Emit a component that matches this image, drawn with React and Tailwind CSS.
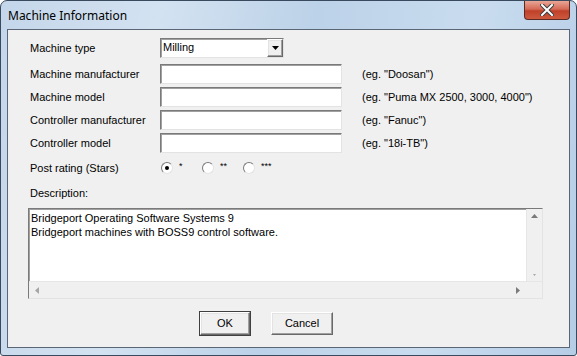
import React from 'react';

const sunken =
  'bg-white border border-t-[#7a7a7a] border-l-[#7a7a7a] border-b-[#e3e3e3] border-r-[#e3e3e3] shadow-[inset_1px_1px_0_#a0a0a0]';
const raised =
  'border border-t-white border-l-white border-b-[#696969] border-r-[#696969] shadow-[inset_-1px_-1px_0_#a0a0a0,inset_1px_1px_0_#e3e3e3] bg-[#f0f0f0]';

const Field = ({ label, hint }) => (
  <div className="flex items-center h-[20px]">
    <div className="w-[130px]">{label}</div>
    <div className={`w-[182px] h-[20px] ${sunken}`} />
    {hint && <div className="ml-[20px]">{hint}</div>}
  </div>
);

const Radio = ({ checked, label }) => (
  <div className="flex items-center w-[41px]">
    <span className="relative w-[12px] h-[12px] rounded-full bg-white border border-t-[#7a7a7a] border-l-[#7a7a7a] border-b-[#e3e3e3] border-r-[#e3e3e3] flex items-center justify-center">
      {checked && <span className="w-[4px] h-[4px] rounded-full bg-black" />}
    </span>
    <span className="ml-[6px] text-[9px] leading-none -mt-[3px]">{label}</span>
  </div>
);

const App = () => {
  return (
    <div className="w-[577px] h-[356px] bg-white overflow-hidden">
      <div className="relative w-[577px] h-[356px] rounded-t-[7px] rounded-b-[3px] border border-[#3a4a5e] bg-[linear-gradient(100deg,#c4d6ea_0%,#d3e2f1_25%,#bcd2e8_50%,#c9dcef_75%,#b6cde6_100%)] flex flex-col">
        <div className="h-[28px] flex items-start">
          <div className="pl-[7px] pt-[6px] text-[12px] text-black" style={{ fontFamily: '"Noto Sans", sans-serif' }}>
            Machine Information
          </div>
          <div className="ml-auto mr-[6px] w-[46px] h-[19px] rounded-b-[4px] border border-t-0 border-[#5b2a22] bg-[linear-gradient(180deg,#e9a696_0%,#d46a56_45%,#c0402a_55%,#cc5a3e_100%)] flex items-center justify-center">
            <svg width="14" height="12" viewBox="0 0 14 12">
              <path d="M2 1 L12 11 M12 1 L2 11" stroke="#3d3d3d" strokeWidth="4" strokeLinecap="square" />
              <path d="M2 1 L12 11 M12 1 L2 11" stroke="#ffffff" strokeWidth="2" strokeLinecap="square" />
            </svg>
          </div>
        </div>
        <div
          className="mx-[6px] mb-[7px] flex-1 border border-[#5a6676] bg-[#f0f0f0] flex flex-col text-[11px] text-black"
          style={{ fontFamily: '"Liberation Sans", Arial, sans-serif' }}
        >
          <div className="pl-[22px] pt-[8px] flex flex-col">
            <div className="flex items-center h-[20px]">
              <div className="w-[130px]">Machine type</div>
              <div className={`w-[124px] h-[20px] ${sunken} flex items-stretch`}>
                <div className="flex-1 pl-[2px] leading-[16px]">Milling</div>
                <div className={`w-[16px] ${raised} flex items-center justify-center`}>
                  <svg width="7" height="4" viewBox="0 0 7 4">
                    <path d="M0 0 H7 L3.5 4 Z" fill="#000" />
                  </svg>
                </div>
              </div>
            </div>
            <div className="mt-[6px] flex flex-col gap-[3px]">
              <Field label="Machine manufacturer" hint={'(eg. "Doosan")'} />
              <Field label="Machine model" hint={'(eg. "Puma MX 2500, 3000, 4000")'} />
              <Field label="Controller manufacturer" hint={'(eg. "Fanuc")'} />
              <Field label="Controller model" hint={'(eg. "18i-TB")'} />
            </div>
            <div className="mt-[8px] flex items-center h-[14px]">
              <div className="w-[131px]">Post rating (Stars)</div>
              <Radio checked label="*" />
              <Radio label="**" />
              <Radio label="***" />
            </div>
            <div className="mt-[10px] h-[14px]">Description:</div>
          </div>
          <div className={`ml-[20px] mt-[9px] w-[515px] h-[91px] ${sunken} flex flex-col`}>
            <div className="flex flex-1">
              <div className="flex-1 pl-[2px] pt-[2px] leading-[14px]">
                <div>Bridgeport Operating Software Systems 9</div>
                <div>Bridgeport machines with BOSS9 control software.</div>
              </div>
              <div className="w-[16px] bg-[#f0f0f0] border-l border-[#e6e6e6] flex flex-col items-center justify-between py-[5px]">
                <svg width="7" height="4" viewBox="0 0 7 4">
                  <path d="M0 4 H7 L3.5 0 Z" fill="#7a7a7a" />
                </svg>
                <svg width="3" height="2" viewBox="0 0 3 2">
                  <path d="M0 0 H3 L1.5 2 Z" fill="#a6a6a6" />
                </svg>
              </div>
            </div>
            <div className="h-[17px] flex bg-[#f0f0f0] border-t border-[#e6e6e6]">
              <div className="flex-1 flex items-center justify-between px-[6px]">
                <svg width="4" height="7" viewBox="0 0 4 7">
                  <path d="M4 0 V7 L0 3.5 Z" fill="#a6a6a6" />
                </svg>
                <svg width="4" height="7" viewBox="0 0 4 7">
                  <path d="M0 0 V7 L4 3.5 Z" fill="#7a7a7a" />
                </svg>
              </div>
              <div className="w-[16px] bg-[#f0f0f0]" />
            </div>
          </div>
          <div className="mt-[13px] flex justify-center gap-[21px] pr-[44px]">
            <button className={`w-[50px] h-[23px] ${raised} outline outline-1 outline-[#404040] text-[11px]`}>OK</button>
            <button className={`w-[62px] h-[23px] ${raised} text-[11px]`}>Cancel</button>
          </div>
        </div>
      </div>
    </div>
  );
};

export default App;
